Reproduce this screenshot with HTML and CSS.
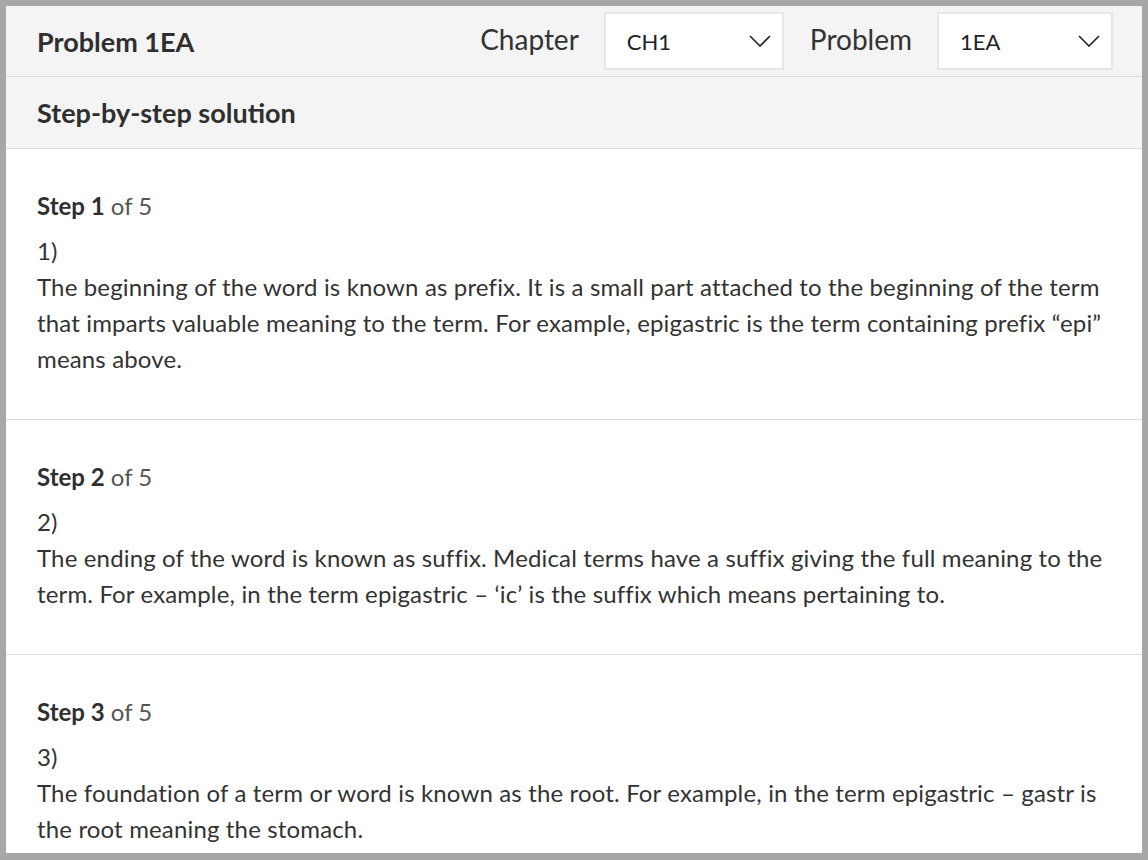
FILE: index.html
```html
<!DOCTYPE html>
<html lang="en">
<head>
<meta charset="utf-8">
<title>Problem 1EA</title>
<link rel="stylesheet" href="styles.css">
</head>
<body>
<div class="frame">
  <div class="panel">
    <header class="topbar">
      <h1 class="title">Problem 1EA</h1>
      <div class="pickers">
        <span class="picker-label">Chapter</span>
        <div class="select select-chapter">
          <span class="select-value">CH1</span>
          <svg class="chev" viewBox="0 0 22 12" width="22" height="12"><path d="M1 1 L11 11 L21 1" fill="none" stroke="#222" stroke-width="1.6"/></svg>
        </div>
        <span class="picker-label">Problem</span>
        <div class="select select-problem">
          <span class="select-value">1EA</span>
          <svg class="chev" viewBox="0 0 22 12" width="22" height="12"><path d="M1 1 L11 11 L21 1" fill="none" stroke="#222" stroke-width="1.6"/></svg>
        </div>
      </div>
    </header>
    <div class="solution-head">Step-by-step solution</div>
    <section class="step">
      <div class="step-label"><b>Step 1</b> of 5</div>
      <div class="step-num">1)</div>
      <p class="step-text">The beginning of the word is known as prefix. It is a small part attached to the beginning of the term that imparts valuable meaning to the term. For example, epigastric is the term containing prefix “epi” means above.</p>
    </section>
    <section class="step">
      <div class="step-label"><b>Step 2</b> of 5</div>
      <div class="step-num">2)</div>
      <p class="step-text">The ending of the word is known as suffix. Medical terms have a suffix giving the full meaning to the term. For example, in the term epigastric – ‘ic’ is the suffix which means pertaining to.</p>
    </section>
    <section class="step">
      <div class="step-label"><b>Step 3</b> of 5</div>
      <div class="step-num">3)</div>
      <p class="step-text">The foundation of a term or word is known as the root. For example, in the term epigastric – gastr is the root meaning the stomach.</p>
    </section>
  </div>
</div>
</body>
</html>
```

FILE: styles.css
```css
html, body {
  margin: 0;
  padding: 0;
  height: 860px;
  overflow: hidden;
  background: #a7a7a7;
}
body {
  font-family: Lato, "Open Sans", "Liberation Sans", sans-serif;
  color: #333;
}
.frame {
  padding: 6px 6px 7px 6px;
  height: 860px;
  box-sizing: border-box;
}
.panel {
  background: #fff;
  height: 847px;
  overflow: hidden;
}
.topbar {
  display: flex;
  align-items: center;
  justify-content: space-between;
  height: 70px;
  padding: 0 29px 0 31px;
  background: #f4f4f4;
  border-bottom: 1px solid #dcdcdc;
}
.title {
  margin: 0;
  font-size: 27px;
  font-weight: 700;
  color: #2f2f2f;
}
.pickers {
  display: flex;
  align-items: center;
}
.picker-label {
  font-size: 28px;
  color: #333;
  margin-right: 25px;
  position: relative;
  top: -2px;
}
.select {
  display: flex;
  align-items: center;
  justify-content: space-between;
  box-sizing: border-box;
  height: 58px;
  padding: 0 11px 0 21px;
  background: #fff;
  border: 2px solid #e6e6e6;
  font-size: 22px;
  color: #222;
}
.select-chapter {
  width: 180px;
  margin-right: 26px;
}
.select-problem {
  width: 176px;
}
.chev {
  display: block;
}
.solution-head {
  height: 71px;
  line-height: 71px;
  padding: 0 31px;
  background: #f4f4f4;
  border-bottom: 1px solid #dcdcdc;
  font-size: 27px;
  font-weight: 700;
  color: #2f2f2f;
}
.step {
  padding: 39px 25px 42px 31px;
  border-bottom: 1px solid #dcdcdc;
  font-size: 24px;
  line-height: 36px;
}
.step-label {
  color: #555;
}
.step-label b {
  color: #2f2f2f;
  font-weight: 700;
}
.step-num {
  margin-top: 9px;
}
.step-text {
  margin: 0;
  letter-spacing: 0.15px;
}
```
